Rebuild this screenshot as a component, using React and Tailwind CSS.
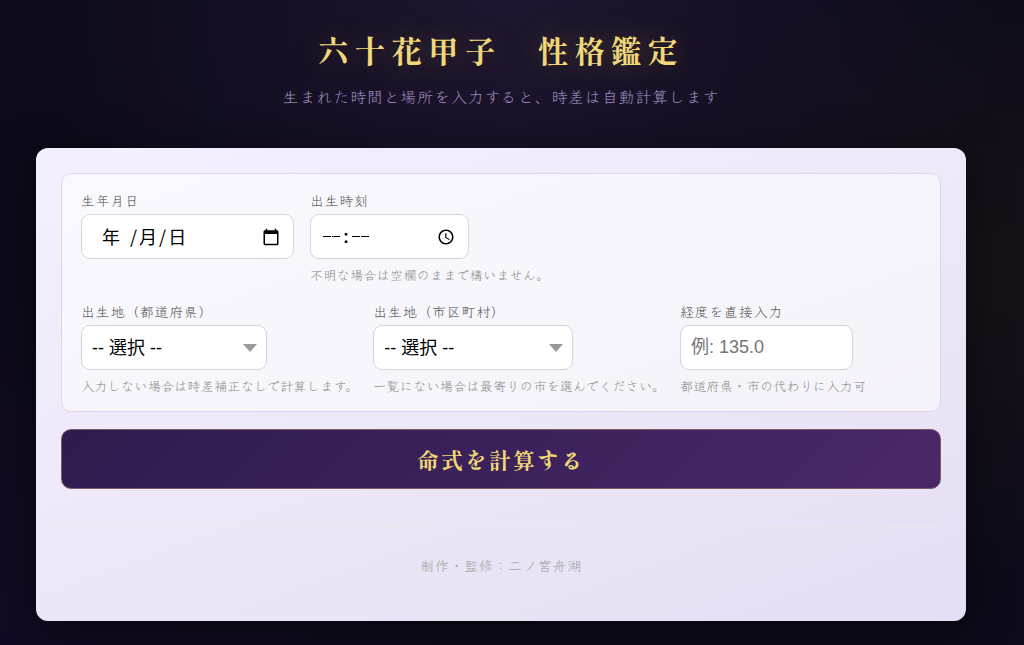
import React from "react";

const controlClass =
  "block h-[45px] rounded-[9px] border border-[#d6d4da] bg-white px-2.5 font-['Liberation_Sans','Noto_Sans_CJK_JP',sans-serif] text-lg text-black outline-none focus:border-[#6b4a8f]";

const pickerClass =
  "w-full [&::-webkit-datetime-edit]:opacity-0 [&::-webkit-calendar-picker-indicator]:opacity-0";

function Field({ id, label, hint, children }) {
  return (
    <div>
      <label htmlFor={id} className="mb-1 block text-sm leading-5 tracking-wider text-[#5c5c5c]">
        {label}
      </label>
      {children}
      {hint && <p className="mt-1.5 text-[13px] leading-5 tracking-wide text-[#8f8f8f]">{hint}</p>}
    </div>
  );
}

function CalendarIcon() {
  return (
    <svg viewBox="0 0 24 24" className="size-[18px]" fill="black" aria-hidden="true">
      <path d="M20 3h-1V1h-2v2H7V1H5v2H4c-1.1 0-2 .9-2 2v16c0 1.1.9 2 2 2h16c1.1 0 2-.9 2-2V5c0-1.1-.9-2-2-2zm0 18H4V8h16v13z" />
    </svg>
  );
}

function ClockIcon() {
  return (
    <svg viewBox="0 0 24 24" className="size-[18px]" fill="black" aria-hidden="true">
      <path d="M11.99 2C6.47 2 2 6.48 2 12s4.47 10 9.99 10C17.52 22 22 17.52 22 12S17.52 2 11.99 2zM12 20c-4.42 0-8-3.58-8-8s3.58-8 8-8 8 3.58 8 8-3.58 8-8 8zm.5-13H11v6l5.25 3.15.75-1.23-4.5-2.67z" />
    </svg>
  );
}

function PickerFace({ children, icon }) {
  return (
    <span
      aria-hidden="true"
      className="pointer-events-none absolute inset-0 flex items-center justify-between pr-3.5 pl-[13px] font-['Noto_Sans_CJK_JP',sans-serif] text-lg text-black"
    >
      {children}
      {icon}
    </span>
  );
}

function SelectField({ id, label, hint, width }) {
  return (
    <Field id={id} label={label} hint={hint}>
      <div className={`relative ${width}`}>
        <select id={id} className={`${controlClass} w-full appearance-none pr-8`}>
          <option>-- 選択 --</option>
        </select>
        <svg viewBox="0 0 14 8" className="pointer-events-none absolute top-[19px] right-2.5 h-2 w-3.5" fill="#999" aria-hidden="true">
          <path d="M0 0h14L7 8z" />
        </svg>
      </div>
    </Field>
  );
}

export default function App() {
  return (
    <div className="min-h-screen bg-[#0d0a1a] bg-[radial-gradient(ellipse_48%_70%_at_50%_0%,rgba(58,40,80,0.38),transparent),radial-gradient(ellipse_35%_50%_at_100%_42%,rgba(55,42,18,0.26),transparent),radial-gradient(ellipse_45%_50%_at_0%_95%,rgba(36,12,62,0.26),transparent)] pr-[58px] pb-6 pl-9 font-['Klee_One','Noto_Sans_CJK_JP',sans-serif]">
      <header className="pt-[27px] text-center">
        <h1 className="font-['Shippori_Mincho','Noto_Serif_CJK_JP','Noto_Sans_CJK_JP',serif] text-[31px] leading-[46px] font-extrabold tracking-[0.18em] text-[#f0d878] [text-shadow:0_0_30px_rgba(212,175,55,0.3)]">
          六十花甲子　性格鑑定
        </h1>
        <p className="mt-[11px] text-base leading-6 tracking-wider text-[#9a8aba]">
          生まれた時間と場所を入力すると、時差は自動計算します
        </p>
      </header>

      <main className="mt-10 rounded-xl bg-linear-[160deg,#f5f0ff,#ece8f7_50%,#e6def4] px-[25px] pt-[25px] pb-[46px] shadow-[0_8px_40px_rgba(0,0,0,0.5)]">
        <form onSubmit={(e) => e.preventDefault()}>
          <div className="flex flex-col gap-4 rounded-[10px] border border-[#e0d3f0] bg-white/55 px-[19px] pt-4 pb-[15px]">
            <div className="flex flex-wrap gap-4">
              <Field id="birth-date" label="生年月日">
                <div className="relative w-[213px]">
                  <input id="birth-date" type="date" className={`${controlClass} ${pickerClass}`} />
                  <PickerFace icon={<CalendarIcon />}>
                    <span className="flex gap-0.5 pb-0.5 pl-2">
                      <span className="mr-2">年</span>
                      <span>/</span>
                      <span>月</span>
                      <span>/</span>
                      <span>日</span>
                    </span>
                  </PickerFace>
                </div>
              </Field>
              <Field id="birth-time" label="出生時刻" hint="不明な場合は空欄のままで構いません。">
                <div className="relative w-[159px]">
                  <input id="birth-time" type="time" className={`${controlClass} ${pickerClass}`} />
                  <PickerFace icon={<ClockIcon />}>
                    <span className="flex items-center gap-[3px]">
                      <span className="flex gap-px">
                        <i className="h-px w-2 bg-black" />
                        <i className="h-px w-2 bg-black" />
                      </span>
                      <span className="font-['Liberation_Sans',sans-serif] leading-none font-bold">:</span>
                      <span className="flex gap-px">
                        <i className="h-px w-2 bg-black" />
                        <i className="h-px w-2 bg-black" />
                      </span>
                    </span>
                  </PickerFace>
                </div>
              </Field>
            </div>
            <div className="flex flex-wrap gap-x-[15px] gap-y-4">
              <SelectField id="prefecture" label="出生地（都道府県）" width="w-[186px]" hint="入力しない場合は時差補正なしで計算します。" />
              <SelectField id="city" label="出生地（市区町村）" width="w-[200px]" hint="一覧にない場合は最寄りの市を選んでください。" />
              <Field id="longitude" label="経度を直接入力" hint="都道府県・市の代わりに入力可">
                <input id="longitude" type="text" inputMode="decimal" placeholder="例: 135.0" className={`${controlClass} w-[173px] placeholder:text-[#757575]`} />
              </Field>
            </div>
          </div>
          <button
            type="submit"
            className="mt-[17px] h-[60px] w-full rounded-[10px] border border-[#7d5a64] bg-linear-[135deg,#2d1b4e,#4a2868] font-['Shippori_Mincho','Noto_Serif_CJK_JP','Noto_Sans_CJK_JP',serif] text-[22px] font-extrabold tracking-[2px] text-[#f0d878]"
          >
            命式を計算する
          </button>
        </form>
        <footer className="mt-[37px] border-t border-[#ece8ec] pt-7 text-center text-sm leading-5 tracking-wider text-[#a3a3a3]">
          制作・監修：二ノ宮舟湖
        </footer>
      </main>
    </div>
  );
}
